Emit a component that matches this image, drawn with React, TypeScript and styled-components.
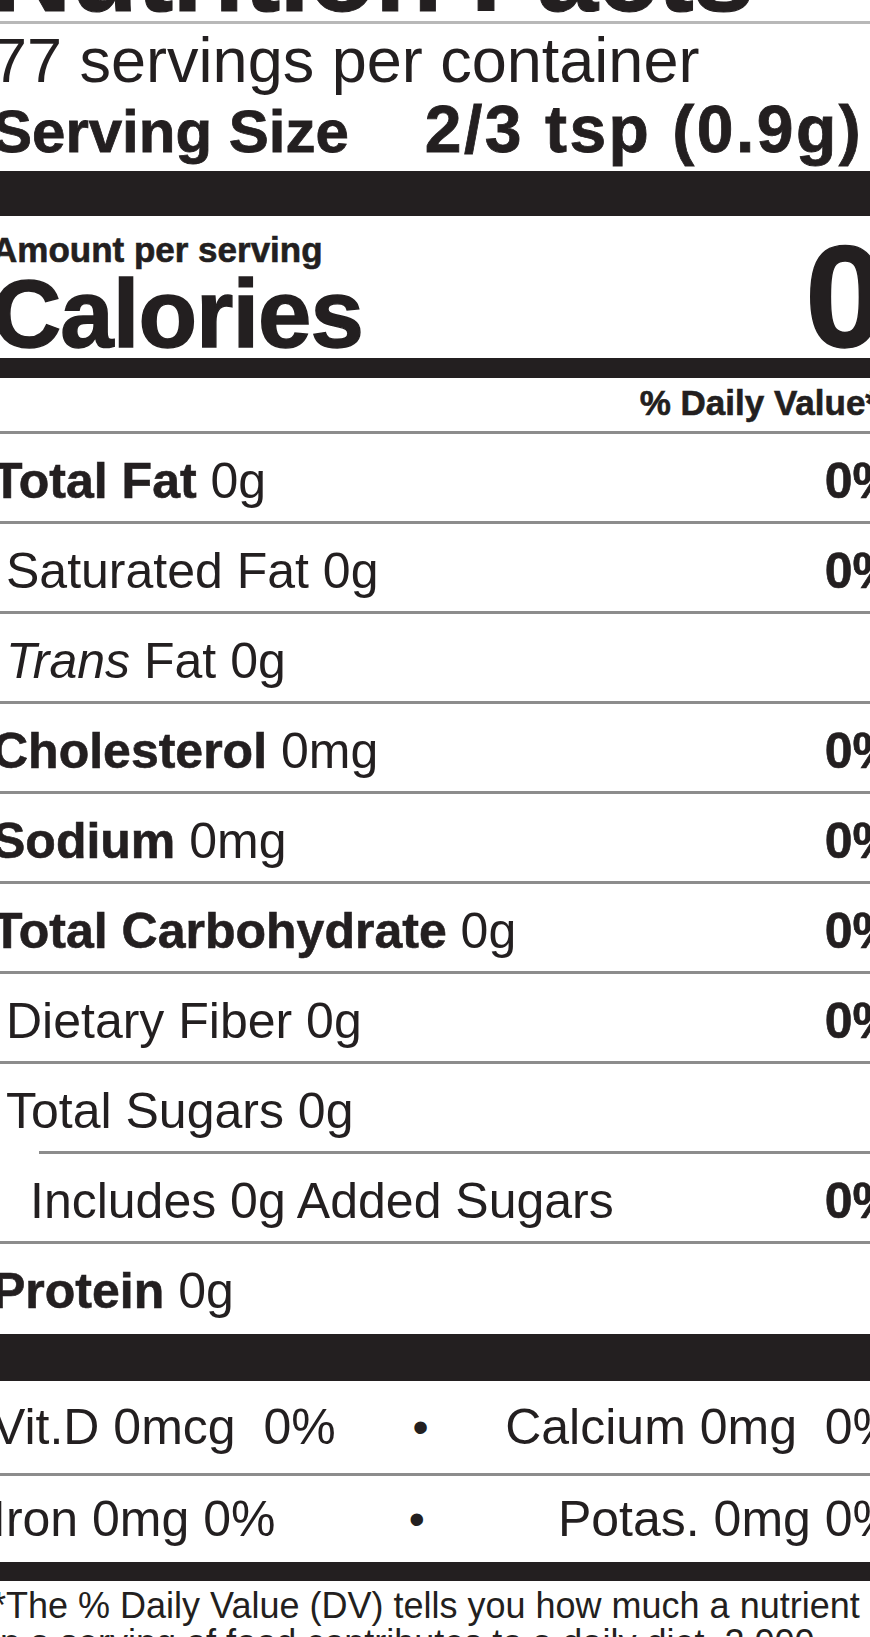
import React from "react";
import styled, { createGlobalStyle } from "styled-components";

const ink = "#231f20";
const rule = "#8c8c8c";

const Global = createGlobalStyle`
  html, body { margin: 0; padding: 0; background: #fff; overflow: hidden; }
  body {
    width: 870px;
    height: 1637px;
    font-family: "Liberation Sans", Arial, Helvetica, sans-serif;
    color: ${ink};
  }
`;

const Page = styled.div`
  width: 870px;
  height: 1637px;
  overflow: hidden;
`;

const Label = styled.section`
  width: 905px;
  margin-left: -8px;
`;

const TitleWrap = styled.header`
  margin-top: -76px;
  border-bottom: 3px solid #b8b8b8;
`;

const Title = styled.h1`
  margin: 0;
  font-size: 110px;
  line-height: 97px;
  font-weight: 700;
  letter-spacing: -1px;
  -webkit-text-stroke: 1px ${ink};
  white-space: nowrap;
`;

const Servings = styled.p`
  margin: 0;
  font-size: 63px;
  line-height: 72px;
  font-weight: 400;
  white-space: nowrap;
`;

const ServingRow = styled.div`
  display: flex;
  align-items: baseline;
  gap: 76px;
  line-height: 69px;
  font-weight: 700;
  white-space: nowrap;
`;

const ServingLabel = styled.span`
  font-size: 60px;
  -webkit-text-stroke: 0.8px ${ink};
`;

const ServingValue = styled.span`
  font-size: 66px;
  line-height: 66px;
  letter-spacing: 2.5px;
  -webkit-text-stroke: 0.8px ${ink};
`;

const Bar = styled.div<{ $h: number; $gap?: number }>`
  height: ${(p) => p.$h}px;
  margin-top: ${(p) => p.$gap ?? 0}px;
  background: ${ink};
`;

const CalSection = styled.div`
  padding-top: 14px;
`;

const AmountLine = styled.div`
  font-size: 35px;
  line-height: 40px;
  font-weight: 700;
  -webkit-text-stroke: 0.6px ${ink};
  white-space: nowrap;
`;

const CalRow = styled.div`
  display: flex;
  justify-content: space-between;
  align-items: baseline;
  height: 88px;
`;

const CalLabel = styled.span`
  font-size: 96px;
  line-height: 88px;
  font-weight: 700;
  letter-spacing: -1px;
  -webkit-text-stroke: 1.4px ${ink};
`;

const CalValue = styled.span`
  font-size: 144px;
  line-height: 56px;
  font-weight: 700;
  margin-right: 12px;
  -webkit-text-stroke: 1.4px ${ink};
`;

const DvHeader = styled.div`
  padding: 5px 18px 8px 0;
  text-align: right;
  font-size: 35px;
  line-height: 40px;
  font-weight: 700;
  -webkit-text-stroke: 0.6px ${ink};
  border-bottom: 3px solid ${rule};
  white-space: nowrap;
`;

const NutrientRow = styled.div<{ $inset?: number; $last?: boolean }>`
  box-sizing: border-box;
  height: 90px;
  padding-top: 19px;
  display: flex;
  justify-content: space-between;
  font-size: 50px;
  line-height: 57px;
  white-space: nowrap;
  background: ${(p) =>
    p.$last ? "none" : `linear-gradient(${rule}, ${rule}) no-repeat right bottom`};
  background-size: calc(100% - ${(p) => p.$inset ?? 0}px) 3px;
`;

const NutrientName = styled.span<{ $indent?: number }>`
  padding-left: ${(p) => p.$indent ?? 0}px;
`;

const Strong = styled.b`
  font-weight: 700;
  -webkit-text-stroke: 0.6px ${ink};
`;

const Em = styled.i`
  font-style: italic;
`;

const Percent = styled.span`
  font-weight: 700;
  -webkit-text-stroke: 0.6px ${ink};
`;

const VitRow = styled.div<{ $h: number; $line?: boolean }>`
  box-sizing: border-box;
  height: ${(p) => p.$h}px;
  display: flex;
  justify-content: space-between;
  align-items: center;
  font-size: 50px;
  line-height: 57px;
  white-space: nowrap;
  border-bottom: ${(p) => (p.$line ? `3px solid ${rule}` : "none")};
`;

const Dot = styled.span`
  font-size: 46px;
`;

const Footnote = styled.p`
  margin: 0;
  padding-top: 6px;
  font-size: 36px;
  line-height: 37px;
`;

type Nutrient = {
  name: React.ReactNode;
  amount: string;
  bold?: boolean;
  indent?: number;
  dv?: string;
  inset?: number;
};

const nutrients: Nutrient[] = [
  { name: "Total Fat", amount: "0g", bold: true, dv: "0%" },
  { name: "Saturated Fat", amount: "0g", indent: 14, dv: "0%" },
  { name: <><Em>Trans</Em> Fat</>, amount: "0g", indent: 14 },
  { name: "Cholesterol", amount: "0mg", bold: true, dv: "0%" },
  { name: "Sodium", amount: "0mg", bold: true, dv: "0%" },
  { name: "Total Carbohydrate", amount: "0g", bold: true, dv: "0%" },
  { name: "Dietary Fiber", amount: "0g", indent: 14, dv: "0%" },
  { name: "Total Sugars", amount: "0g", indent: 14, inset: 47 },
  { name: "Includes 0g Added Sugars", amount: "", indent: 38, dv: "0%" },
  { name: "Protein", amount: "0g", bold: true },
];

export default function App() {
  return (
    <Page>
      <Global />
      <Label>
        <TitleWrap>
          <Title>Nutrition Facts</Title>
        </TitleWrap>
        <Servings>77 servings per container</Servings>
        <ServingRow>
          <ServingLabel>Serving Size</ServingLabel>
          <ServingValue>2/3 tsp (0.9g)</ServingValue>
        </ServingRow>
        <Bar $h={45} $gap={5} />
        <CalSection>
          <AmountLine>Amount per serving</AmountLine>
          <CalRow>
            <CalLabel>Calories</CalLabel>
            <CalValue>0</CalValue>
          </CalRow>
        </CalSection>
        <Bar $h={20} />
        <DvHeader>% Daily Value*</DvHeader>
        {nutrients.map((n, i) => (
          <NutrientRow key={i} $inset={n.inset} $last={i === nutrients.length - 1}>
            <NutrientName $indent={n.indent}>
              {n.bold ? <Strong>{n.name}</Strong> : n.name}
              {n.amount ? ` ${n.amount}` : ""}
            </NutrientName>
            {n.dv ? <Percent>{n.dv}</Percent> : null}
          </NutrientRow>
        ))}
        <Bar $h={47} />
        <VitRow $h={95} $line>
          <span>Vit.D 0mcg&nbsp; 0%</span>
          <Dot>•</Dot>
          <span>Calcium 0mg&nbsp; 0%</span>
        </VitRow>
        <VitRow $h={86}>
          <span>Iron 0mg 0%</span>
          <Dot>•</Dot>
          <span>Potas. 0mg 0%</span>
        </VitRow>
        <Bar $h={19} />
        <Footnote>
          *The % Daily Value (DV) tells you how much a nutrient in a serving of food
          contributes to a daily diet. 2,000 calories a day is used for general
          nutrition advice.
        </Footnote>
      </Label>
    </Page>
  );
}
